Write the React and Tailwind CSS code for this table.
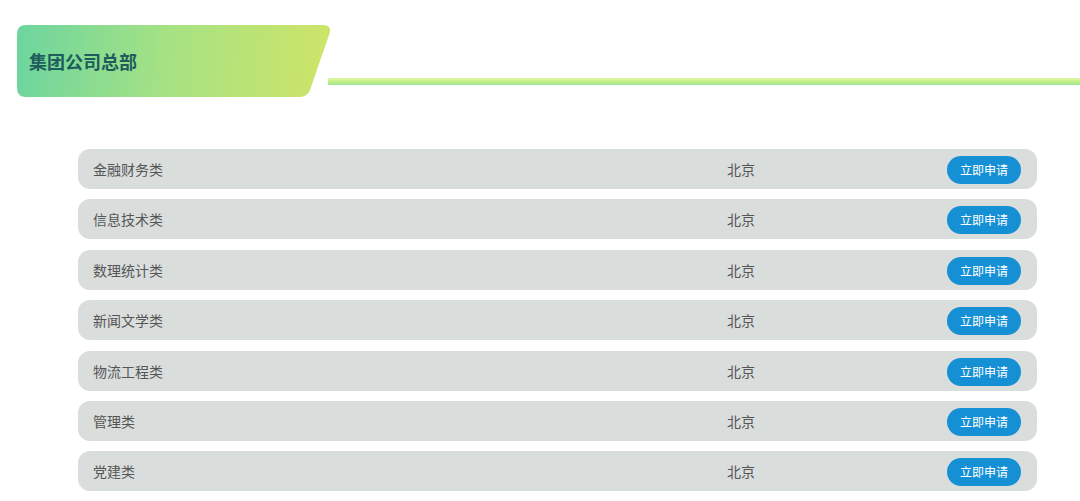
import React from 'react';

const jobs = ['金融财务类', '信息技术类', '数理统计类', '新闻文学类', '物流工程类', '管理类', '党建类'];

const font = { fontFamily: '"Noto Sans CJK SC", "Noto Sans", sans-serif' };

function Tab() {
  return (
    <div className="relative flex h-[72px] w-[314px] shrink-0 items-center pl-3">
      <svg className="absolute inset-0" width="314" height="72" viewBox="0 0 314 72">
        <defs>
          <linearGradient id="tabg" gradientUnits="userSpaceOnUse" x1="0" y1="22" x2="300" y2="50">
            <stop offset="0" stopColor="#6dd59f" />
            <stop offset="0.5" stopColor="#a6e283" />
            <stop offset="1" stopColor="#cbe46a" />
          </linearGradient>
        </defs>
        <path
          d="M9 0 H305 Q316 0 312 10 L293 65 Q290 72 283 72 H9 Q0 72 0 63 V9 Q0 0 9 0 Z"
          fill="url(#tabg)"
        />
      </svg>
      <span className="relative mt-[1px] text-[18px] font-bold text-[#1d5d5c]">集团公司总部</span>
    </div>
  );
}

export default function App() {
  return (
    <div className="min-h-[501px] w-[1080px] bg-white pt-[25px]" style={font}>
      <div className="flex items-start pl-[17px]">
        <Tab />
        <div className="mt-[53px] -ml-[3px] h-[7px] flex-1 bg-gradient-to-b from-[#e2f7a6] via-[#c3ee84] to-[#9ce99c]" />
      </div>
      <div className="ml-[78px] mt-[52px] flex w-[959px] flex-col gap-[10.4px]">
        {jobs.map((job) => (
          <div key={job} className="flex h-10 items-center rounded-xl bg-[#d9dedd] pl-[15px] pr-4 text-sm text-[#555]">
            <span className="w-[634px]">{job}</span>
            <span className="flex-1">北京</span>
            <button className="mt-[2px] h-7 w-[74px] rounded-full bg-[#1690d5] text-xs text-white">立即申请</button>
          </div>
        ))}
      </div>
    </div>
  );
}
